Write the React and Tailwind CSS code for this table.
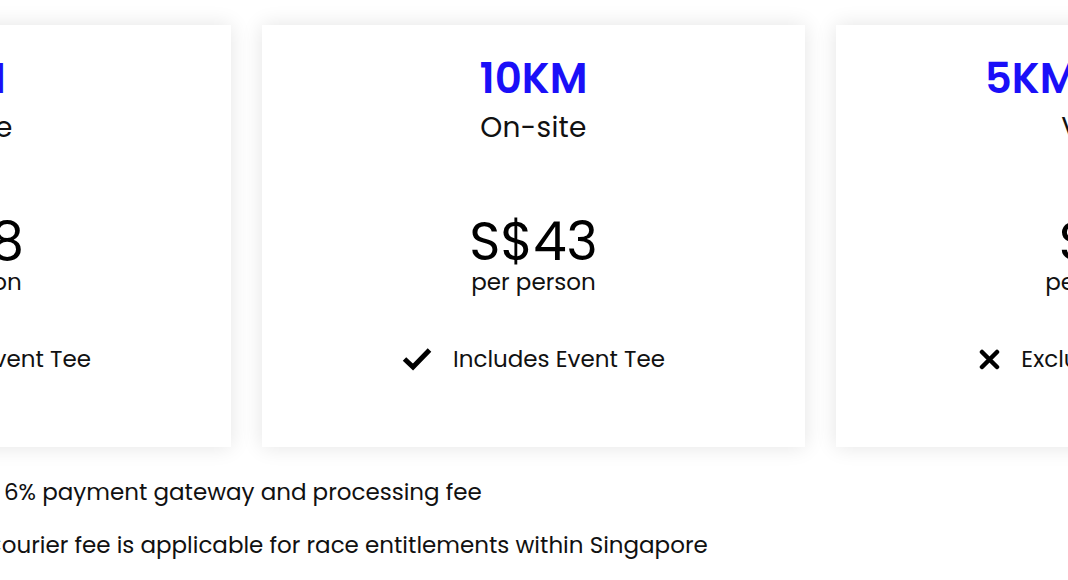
import React from 'react';

const plans = [
  { title: '5KM', mode: 'On-site', price: 'S$38', tee: true },
  { title: '10KM', mode: 'On-site', price: 'S$43', tee: true },
  { title: '5KM Virtual', mode: 'Virtual', price: 'S$8', tee: false },
];

const CheckIcon = () => (
  <svg width="30" height="24" viewBox="0 0 30 24" fill="none">
    <path d="M2.5 12 L11 20 L27.5 3" stroke="#000" strokeWidth="5" strokeLinejoin="miter" />
  </svg>
);

const CrossIcon = () => (
  <svg width="21" height="21" viewBox="0 0 21 21" fill="none">
    <path d="M3 3 L18 18 M18 3 L3 18" stroke="#000" strokeWidth="4.5" strokeLinecap="round" />
  </svg>
);

const PlanCard = ({ plan }) => (
  <div className="w-[543px] h-[422px] shrink-0 bg-white shadow-[0_0_20px_rgba(0,0,0,0.11)] flex flex-col items-center">
    <h2 className="mt-[29px] text-[42px] leading-[50px] font-semibold text-[#1a0ff8]">{plan.title}</h2>
    <p className="mt-[7px] text-[28px] leading-[34px] tracking-[0.3px] text-[#111]">{plan.mode}</p>
    <p className="mt-[67px] text-[53px] leading-[60px] text-black">{plan.price}</p>
    <p className="-mt-[4px] text-[23px] leading-[28px] text-[#111]">per person</p>
    <div className="mt-[49px] flex items-center gap-[21px]">
      {plan.tee ? <CheckIcon /> : <CrossIcon />}
      <span className="text-[23px] leading-[28px] text-[#111]">
        {plan.tee ? 'Includes Event Tee' : 'Excludes Event Tee'}
      </span>
    </div>
  </div>
);

export default function App() {
  return (
    <div className="w-[1068px] h-[580px] overflow-hidden bg-white font-['Poppins','Open_Sans',sans-serif]">
      <div className="flex gap-[31px] ml-[-312px] pt-[25px]">
        {plans.map((plan) => (
          <PlanCard key={plan.title} plan={plan} />
        ))}
      </div>
      <div className="ml-[-16px] mt-[31px] flex flex-col gap-[25px] text-[23px] leading-[28px] text-[#111]">
        <p className="pl-[20px]">6% payment gateway and processing fee</p>
        <p>Courier fee is applicable for race entitlements within Singapore</p>
      </div>
    </div>
  );
}
